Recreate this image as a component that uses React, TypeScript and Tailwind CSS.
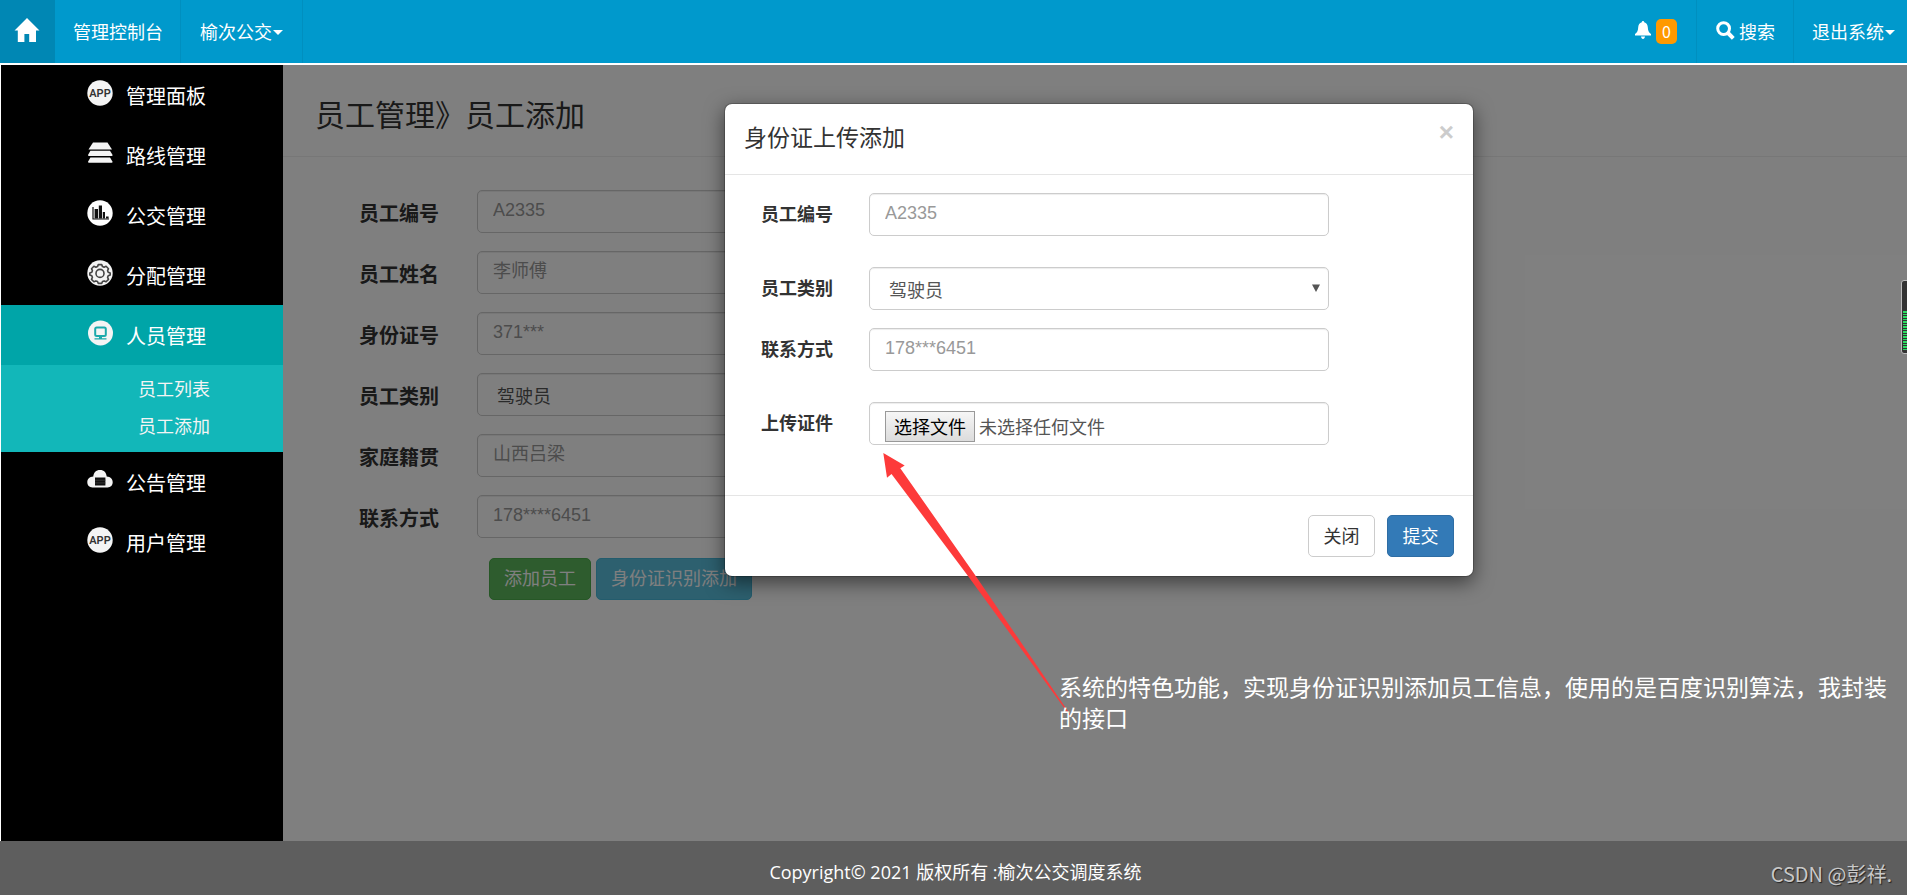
import { useState } from 'react';
import type { ReactNode } from 'react';

const HomeIcon = () => (
    <svg viewBox="0 0 26 24" className="w-[26px] h-6" fill="currentColor" aria-hidden="true">
        <path d="M13 0 L25.5 12.6 H22 V24 H15.2 V16 H10.4 V24 H3.8 V12.6 H0.5 Z" />
    </svg>
);

const BellIcon = () => (
    <svg viewBox="0 0 16 18" className="w-4 h-[18px]" fill="currentColor" aria-hidden="true">
        <path d="M8 0 C8.8 0 9.2 0.6 9.2 1.3 C11.6 2 12.6 3.8 12.8 6.2 C13 9.6 13.6 11.2 16 13 V14.4 H0 V13 C2.4 11.2 3 9.6 3.2 6.2 C3.4 3.8 4.4 2 6.8 1.3 C6.8 0.6 7.2 0 8 0 Z M6 15.6 H10 C9.8 17.2 9 18 8 18 C7 18 6.2 17.2 6 15.6 Z" />
    </svg>
);

const SearchIcon = () => (
    <svg viewBox="0 0 19 19" className="w-[19px] h-[19px]" fill="none" stroke="currentColor" aria-hidden="true">
        <circle cx="7.6" cy="7.6" r="5.9" strokeWidth="3" />
        <path d="M12 12 L17.3 17.3" strokeWidth="4" />
    </svg>
);

const Caret = () => (
    <svg viewBox="0 0 10 5" className="w-[10px] h-[5px] mt-1" fill="currentColor" aria-hidden="true">
        <path d="M0 0 H10 L5 5 Z" />
    </svg>
);

const AppIcon = () => (
    <svg viewBox="0 0 26 26" className="w-[26px] h-[26px] mb-1" aria-hidden="true">
        <circle cx="13" cy="13" r="12.7" fill="#f4f4f4" />
        <text x="13" y="17" fontSize="11" fontWeight="600" textAnchor="middle" fill="#333" fontFamily="Roboto, sans-serif">APP</text>
    </svg>
);

const LayersIcon = () => (
    <svg viewBox="0 0 26 26" className="w-[26px] h-[26px] mb-1" fill="#f4f4f4" aria-hidden="true">
        <path d="M6 2.5 H20.5 L25 9.5 H1.5 Z" />
        <path d="M3.4 10.8 H23 L25.6 15 Q25.6 16 24.6 16 H2 Q1 16 1 15 Z" />
        <path d="M3.4 17.4 H23 L25.6 21.8 Q25.6 22.8 24.6 22.8 H2 Q1 22.8 1 21.8 Z" />
    </svg>
);

const ChartIcon = () => (
    <svg viewBox="0 0 26 26" className="w-[26px] h-[26px] mb-1" aria-hidden="true">
        <circle cx="13" cy="13" r="12.7" fill="#fff" />
        <path d="M6 7 V19 H22" fill="none" stroke="#111" strokeWidth="1.2" />
        <path d="M7.6 9 H11 V18.5 H7.6 Z M11.8 5.5 H15 V18.5 H11.8 Z M15.8 12 H18 V18.5 H15.8 Z M19 16.4 H21.6 V18.5 H19 Z" fill="#111" />
    </svg>
);

const GearIcon = () => (
    <svg viewBox="0 0 26 26" className="w-[26px] h-[26px] mb-1" fill="none" stroke="#444" aria-hidden="true">
        <circle cx="13" cy="13" r="12.7" fill="#f4f4f4" stroke="none" />
        <path d="M11.3 4.6 h3.4 l.8 2 1.6.6 2-.9 2.4 2.4 -.9 2 .6 1.6 2 .8 v1.8 l-2 .9 -.6 1.6 .9 2 -2.4 2.4 -2-.9 -1.6.6 -.8 1.9 h-3.4 l-.8-1.9 -1.6-.6 -2 .9 -2.4-2.4 .9-2 -.6-1.6 -2-.9 v-1.8 l2-.8 .6-1.6 -.9-2 2.4-2.4 2 .9 1.6-.6 Z" strokeWidth="1.6" strokeLinejoin="round" />
        <circle cx="13" cy="13.4" r="4" strokeWidth="1.6" />
    </svg>
);

const MonitorIcon = () => (
    <svg viewBox="0 0 26 26" className="w-[26px] h-[26px] mb-1" aria-hidden="true">
        <circle cx="13.5" cy="13" r="12.5" fill="#f4f4f4" />
        <rect x="8.2" y="7.4" width="10.6" height="8.6" rx="1.5" fill="none" stroke="#1ba9ab" strokeWidth="2" />
        <path d="M12 16.5 H15 V18.2 H19.5 V19.6 H7.5 V18.2 H12 Z" fill="#1ba9ab" />
    </svg>
);

const CloudIcon = () => (
    <svg viewBox="0 0 26 26" className="w-[26px] h-[26px] mb-1" aria-hidden="true">
        <path d="M5.5 20.5 C2.3 20.5 0.3 18.3 0.3 15.3 C0.3 12 2.6 9.9 6.3 9.6 C6.6 5.6 9 3 13 3 C17 3 19.4 5.6 19.7 9.6 C23.4 9.9 25.7 12 25.7 15.3 C25.7 18.3 23.7 20.5 20.5 20.5 Z" fill="#f4f4f4" />
        <rect x="8" y="10.5" width="10.4" height="8" fill="#111" />
        <path d="M8 13.2 H18.4 M8 15.9 H18.4" stroke="#444" strokeWidth="0.7" />
    </svg>
);

const navigation = [
    { name: '管理面板', icon: AppIcon },
    { name: '路线管理', icon: LayersIcon },
    { name: '公交管理', icon: ChartIcon },
    { name: '分配管理', icon: GearIcon },
    { name: '人员管理', icon: MonitorIcon, children: ['员工列表', '员工添加'] },
    { name: '公告管理', icon: CloudIcon },
    { name: '用户管理', icon: AppIcon },
];

const employeeFields = [
    { id: 'emp-no', label: '员工编号', placeholder: 'A2335' },
    { id: 'emp-name', label: '员工姓名', placeholder: '李师傅' },
    { id: 'emp-card', label: '身份证号', placeholder: '371***' },
    { id: 'emp-type', label: '员工类别', select: true },
    { id: 'emp-home', label: '家庭籍贯', placeholder: '山西吕梁' },
    { id: 'emp-phone', label: '联系方式', placeholder: '178****6451' },
];

const controlClass =
    "w-full h-[43px] px-[15px] pb-[2px] rounded-[5px] border border-[#ccc] bg-white text-[18px] text-[#555] placeholder:text-[#999] shadow-[inset_0_1px_1px_rgba(0,0,0,0.075)] outline-none font-['Liberation_Sans','Noto_Sans_CJK_SC',sans-serif]";

const TextField = ({ id, placeholder }: { id: string; placeholder?: string }) => (
    <input id={id} type="text" placeholder={placeholder} className={controlClass} />
);

const TypeSelect = ({ id }: { id: string }) => (
    <div className="relative">
        <select
            id={id}
            className="appearance-none block w-full h-[43px] px-[19px] rounded-[5px] border border-[#ccc] bg-white text-[18px] text-[#555] shadow-[inset_0_1px_1px_rgba(0,0,0,0.075)] outline-none"
        >
            <option>驾驶员</option>
            <option>乘务员</option>
        </select>
        <svg viewBox="0 0 8 8" className="absolute right-[9px] top-[17px] w-2 h-2 pointer-events-none" fill="#555" aria-hidden="true">
            <path d="M0 0.5 H8 L4 8 Z" />
        </svg>
    </div>
);

const ModalRow = ({ id, label, children }: { id: string; label: string; children: ReactNode }) => (
    <div className="flex items-center">
        <label htmlFor={id} className="w-[108px] shrink-0 pb-1 text-[18px] font-bold text-[#333]">{label}</label>
        <div className="w-[460px]">{children}</div>
    </div>
);

const App = () => {
    const [isModalOpen, setModalOpen] = useState(true);
    const [fileName, setFileName] = useState('');

    return (
        <div className="min-h-screen flex flex-col bg-white font-['Noto_Sans_CJK_SC',sans-serif] text-[18px] leading-[26px]">
            {/* Top Bar */}
            <header className="h-[63px] mb-[2px] bg-[#0099cc] text-white flex items-stretch justify-between">
                <nav className="flex">
                    <a href="#home" aria-label="首页" className="w-[55px] pr-[2px] pb-[3px] bg-[#0087b4] flex items-center justify-center"><HomeIcon /></a>
                    <a href="#console" className="w-[126px] pl-[18px] pb-[2px] flex items-center border-r border-[#008fbf]">管理控制台</a>
                    <a href="#company" className="w-[122px] pl-[19px] pb-[2px] flex items-center gap-[1px] border-r border-[#008fbf]">榆次公交<Caret /></a>
                </nav>
                <nav className="flex">
                    <a href="#notice" className="pr-[19px] flex items-center gap-[5px] border-r border-[#008fbf]">
                        <span className="pb-1"><BellIcon /></span>
                        <span className="w-[21px] h-[25px] rounded-[5px] bg-[#ff9900] text-center text-[16px] leading-[25px]">0</span>
                    </a>
                    <a href="#search" className="w-[97px] pl-[19px] pb-[2px] flex items-center gap-1 border-r border-[#008fbf]">
                        <SearchIcon />搜索
                    </a>
                    <a href="#logout" className="w-[113px] pl-[18px] pb-[2px] flex items-center gap-[1px]">退出系统<Caret /></a>
                </nav>
            </header>

            <div className="flex-1 flex items-stretch pl-px">
                {/* Sidebar */}
                <aside className="w-[282px] shrink-0 bg-black text-white">
                    {navigation.map((item) => {
                        const Icon = item.icon;
                        return (
                            <div key={item.name}>
                                <a
                                    href="#menu"
                                    className={`h-[60px] pl-[86px] flex items-center gap-[13px] text-[20px] ${item.children ? 'bg-[#00a5a8]' : ''}`}
                                >
                                    <Icon />
                                    <span className="pt-[2px]">{item.name}</span>
                                </a>
                                {item.children && (
                                    <div className="bg-[#12b7b9] pt-1 pb-[9px]">
                                        {item.children.map((child) => (
                                            <a key={child} href="#submenu" className="h-[37px] pl-[137px] flex items-center text-[#f4f4f4]">{child}</a>
                                        ))}
                                    </div>
                                )}
                            </div>
                        );
                    })}
                </aside>

                {/* Main Content */}
                <main className="relative flex-1 min-w-0 bg-white">
                    <h1 className="h-[92px] pl-8 pt-1 flex items-center border-b border-[#eee] text-[30px] text-[#333]">员工管理》员工添加</h1>

                    <form className="pt-[33px] pl-[76px] flex flex-col gap-[18px]">
                        {employeeFields.map((field) => (
                            <div key={field.id} className="flex items-center">
                                <label htmlFor={field.id} className="w-[118px] shrink-0 pt-[2px] text-[20px] font-bold text-[#333]">{field.label}</label>
                                <div className="flex-1 max-w-[575px]">
                                    {field.select ? <TypeSelect id={field.id} /> : <TextField id={field.id} placeholder={field.placeholder} />}
                                </div>
                            </div>
                        ))}
                        <div className="pl-[130px] pt-[2px] flex gap-[5px]">
                            <button type="submit" className="h-[42px] px-[14px] pb-1 rounded-[5px] bg-[#5cb85c] border border-[#4cae4c] text-white">添加员工</button>
                            <button type="button" onClick={() => setModalOpen(true)} className="h-[42px] px-[14px] pb-1 rounded-[5px] bg-[#5bc0de] border border-[#46b8da] text-white">身份证识别添加</button>
                        </div>
                    </form>

                    {/* Upload Modal */}
                    {isModalOpen && (
                        <div className="absolute inset-0 bg-black/50 flex items-start justify-center pt-[38px] pl-2">
                            <div role="dialog" aria-labelledby="modal-title" className="w-[750px] bg-white bg-clip-padding rounded-[8px] border border-black/20 shadow-[0_6px_19px_rgba(0,0,0,0.5)]">
                                <div className="h-[71px] px-[19px] pt-[19px] flex items-start justify-between border-b border-[#e5e5e5]">
                                    <h2 id="modal-title" className="text-[23px] text-[#333]">身份证上传添加</h2>
                                    <button
                                        type="button"
                                        aria-label="Close"
                                        onClick={() => setModalOpen(false)}
                                        className="text-[26px] leading-[18px] font-bold text-[#ccc] font-['Liberation_Sans',sans-serif]"
                                    >
                                        ×
                                    </button>
                                </div>
                                <form className="pt-[18px] pb-[50px] pl-[36px] flex flex-col">
                                    <ModalRow id="card-no" label="员工编号"><TextField id="card-no" placeholder="A2335" /></ModalRow>
                                    <div className="py-[31px] flex flex-col gap-[18px]">
                                        <ModalRow id="card-type" label="员工类别"><TypeSelect id="card-type" /></ModalRow>
                                        <ModalRow id="card-phone" label="联系方式"><TextField id="card-phone" placeholder="178***6451" /></ModalRow>
                                    </div>
                                    <ModalRow id="card-file" label="上传证件">
                                        <div className="h-[43px] px-[15px] pt-[8px] flex items-start gap-1 rounded-[5px] border border-[#ccc] text-[#555] shadow-[inset_0_1px_1px_rgba(0,0,0,0.075)]">
                                            <input
                                                id="card-file"
                                                type="file"
                                                className="sr-only"
                                                onChange={(e) => setFileName(e.target.files?.[0]?.name ?? '')}
                                            />
                                            <label htmlFor="card-file" className="h-[31px] px-2 border border-[#999] bg-linear-to-b from-[#f6f6f6] to-[#dcdcdc] text-black leading-[28px]">选择文件</label>
                                            <span className="leading-[30px]">{fileName || '未选择任何文件'}</span>
                                        </div>
                                    </ModalRow>
                                </form>
                                <div className="px-[19px] py-[19px] flex justify-end gap-3 border-t border-[#e5e5e5]">
                                    <button type="button" onClick={() => setModalOpen(false)} className="w-[67px] h-[42px] pb-[3px] rounded-[5px] bg-white border border-[#ccc] text-[#333]">关闭</button>
                                    <button type="submit" className="w-[67px] h-[42px] pb-[3px] rounded-[5px] bg-[#337ab7] border border-[#2e6da4] text-white">提交</button>
                                </div>
                            </div>
                        </div>
                    )}

                    {/* Callout */}
                    <svg viewBox="0 0 190 266" className="absolute left-[600px] top-[387px] w-[190px] h-[266px] pointer-events-none" fill="#fd3a3a" aria-hidden="true">
                        <path d="M0.3 1 L21.7 13.5 L17.3 16.3 L90 120 L188.7 264.7 L186 262.5 L83.5 122 L8.5 22 L4 25.8 Z" />
                    </svg>
                    <p className="absolute left-[776px] right-[16px] top-[606px] text-[23px] leading-[31px] text-white">
                        系统的特色功能，实现身份证识别添加员工信息，使用的是百度识别算法，我封装的接口
                    </p>
                </main>
            </div>

            <footer className="relative h-[54px] pt-2 pl-1 flex items-center justify-center bg-[#5e5e5e] text-white font-['Open_Sans','Noto_Sans_CJK_SC',sans-serif]">
                Copyright© 2021 版权所有 :榆次公交调度系统
                <span className="absolute right-[15px] top-5 text-[20px] text-[#c8c8c8] [text-shadow:1px_1px_1px_#222] font-['Noto_Sans_CJK_SC',sans-serif]">CSDN @彭祥.</span>
            </footer>

            {/* Level meter docked to the window edge */}
            <svg viewBox="0 0 6 74" className="fixed right-0 top-[280px] w-[6px] h-[74px]" aria-hidden="true">
                <path d="M6 0.5 H3 Q0.5 0.5 0.5 3 V71 Q0.5 73.5 3 73.5 H6" fill="#333" stroke="#bbb" />
                <path d="M4 31 V71" stroke="#2bdc62" strokeWidth="4" strokeDasharray="2 1 1 1" />
            </svg>
        </div>
    );
};

export default App;
